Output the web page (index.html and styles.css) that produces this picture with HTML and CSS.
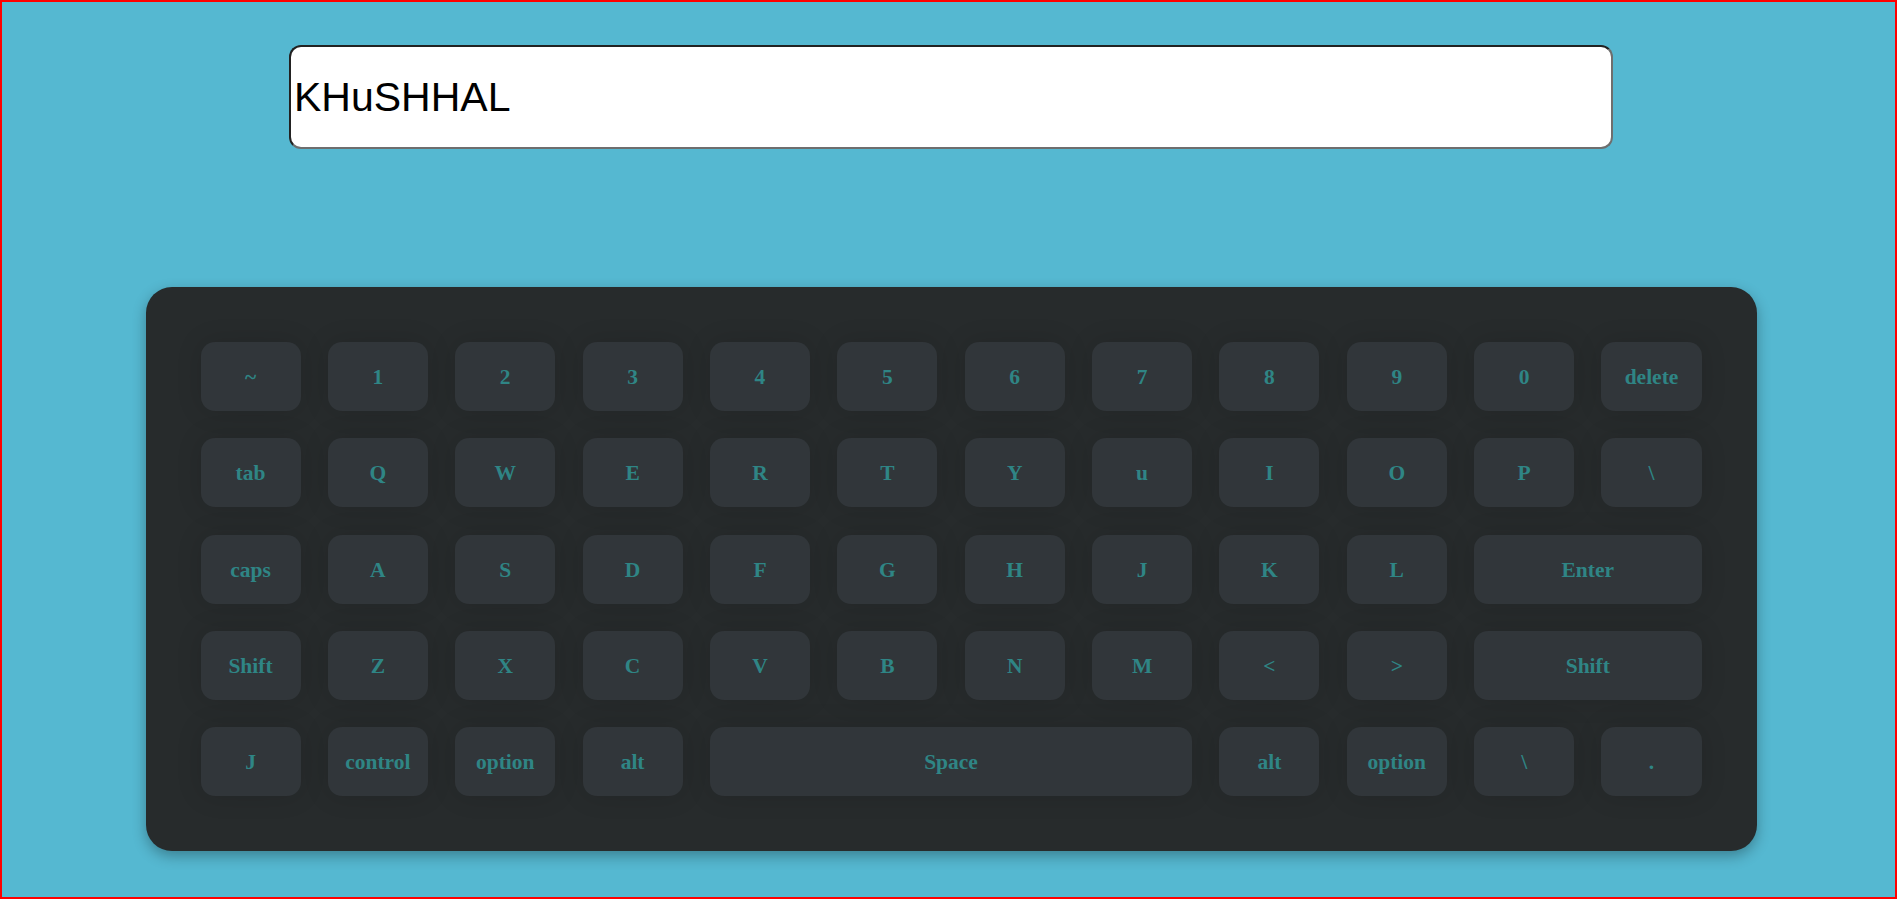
FILE: index.html
```html
<!DOCTYPE html>
<html>
<head>
<meta charset="utf-8">
<link rel="stylesheet" href="styles.css">
</head>
<body>
<div class="page">
  <input class="display" type="text" value="KHuSHHAL" readonly>
  <div class="keyboard">
    <div class="key">~</div><div class="key">1</div><div class="key">2</div><div class="key">3</div><div class="key">4</div><div class="key">5</div><div class="key">6</div><div class="key">7</div><div class="key">8</div><div class="key">9</div><div class="key">0</div><div class="key">delete</div>
    <div class="key">tab</div><div class="key">Q</div><div class="key">W</div><div class="key">E</div><div class="key">R</div><div class="key">T</div><div class="key">Y</div><div class="key">u</div><div class="key">I</div><div class="key">O</div><div class="key">P</div><div class="key">\</div>
    <div class="key">caps</div><div class="key">A</div><div class="key">S</div><div class="key">D</div><div class="key">F</div><div class="key">G</div><div class="key">H</div><div class="key">J</div><div class="key">K</div><div class="key">L</div><div class="key wide">Enter</div>
    <div class="key">Shift</div><div class="key">Z</div><div class="key">X</div><div class="key">C</div><div class="key">V</div><div class="key">B</div><div class="key">N</div><div class="key">M</div><div class="key">&lt;</div><div class="key">&gt;</div><div class="key wide">Shift</div>
    <div class="key">J</div><div class="key">control</div><div class="key">option</div><div class="key">alt</div><div class="key space">Space</div><div class="key">alt</div><div class="key">option</div><div class="key">\</div><div class="key">.</div>
  </div>
</div>
</body>
</html>
```

FILE: styles.css
```css
html, body {
  margin: 0;
  padding: 0;
}

.page {
  box-sizing: border-box;
  width: 1897px;
  height: 899px;
  border: 2px solid #ff0000;
  background: #55b8d1;
  display: flex;
  flex-direction: column;
  align-items: center;
  padding-left: 5px;
}

.display {
  box-sizing: border-box;
  width: 1324px;
  height: 104px;
  margin-top: 43px;
  padding: 0 0 0 3px;
  border-width: 2px;
  border-style: solid;
  border-color: #222222 #6e6e6e #6e6e6e #222222;
  border-radius: 12px;
  background: #ffffff;
  font-family: "Liberation Sans", Arial, sans-serif;
  font-size: 41px;
  color: #000000;
  outline: none;
}

.keyboard {
  box-sizing: border-box;
  width: 1611px;
  margin-top: 138px;
  padding: 55px;
  background: #272b2c;
  border-radius: 26px;
  box-shadow: 0 5px 14px rgba(0, 0, 0, 0.3);
  display: grid;
  grid-template-columns: repeat(12, 1fr);
  grid-auto-rows: 69px;
  column-gap: 27.36px;
  row-gap: 27.25px;
}

.key {
  box-sizing: border-box;
  padding-top: 2px;
  background: #31363a;
  border-radius: 14px;
  box-shadow: 0 0 26px rgba(0, 0, 0, 0.13);
  color: #2f8585;
  font-family: "Liberation Serif", "Times New Roman", serif;
  font-weight: bold;
  font-size: 21.5px;
  display: flex;
  align-items: center;
  justify-content: center;
}

.wide {
  grid-column: span 2;
}

.space {
  grid-column: span 4;
}
```
